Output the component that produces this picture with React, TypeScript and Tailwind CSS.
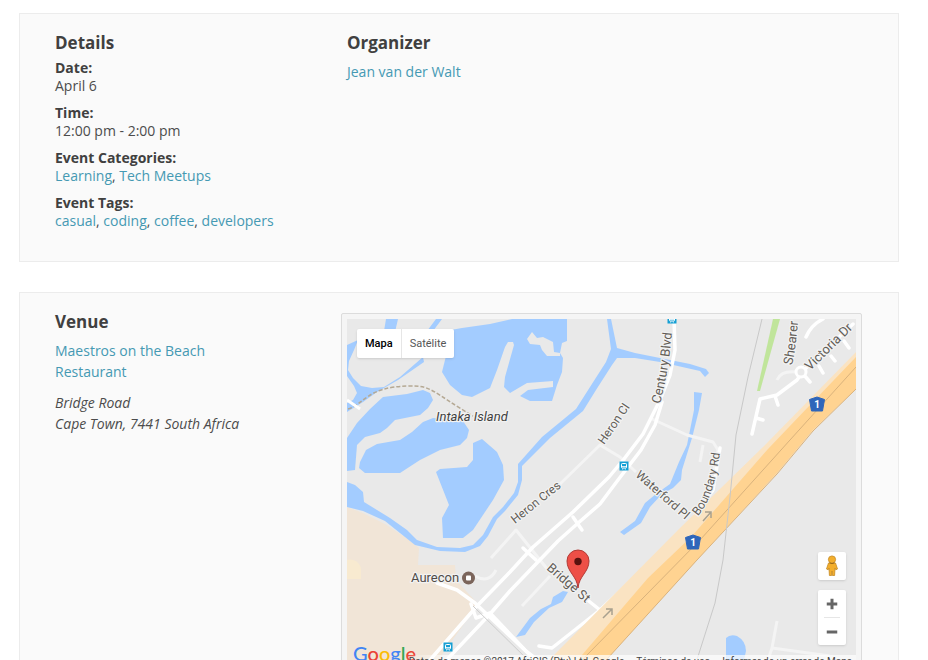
import { Minus, Plus } from "lucide-react";

const WATER = "#a3ccff";

const details = [
    { label: "Date:", text: "April 6" },
    { label: "Time:", text: "12:00 pm - 2:00 pm" },
    { label: "Event Categories:", links: ["Learning", "Tech Meetups"] },
    { label: "Event Tags:", links: ["casual", "coding", "coffee", "developers"] },
];

const streets = [
    { id: "century", name: "Century Blvd", size: 13, d: "M660 404 Q669 372 673 320" },
    { id: "heron-cl", name: "Heron Cl", size: 12, d: "M604 445 L639 394" },
    { id: "heron-cres", name: "Heron Cres", size: 12, d: "M515 524 L574 477" },
    { id: "waterford", name: "Waterford Pl", size: 12, d: "M635 476 L699 532" },
    { id: "boundary", name: "Boundary Rd", size: 12, d: "M698 516 Q717 494 721 440" },
    { id: "bridge", name: "Bridge St", size: 13, d: "M546 569 L599 615" },
    { id: "shearer", name: "Shearer", size: 13, d: "M792 365 Q796 350 799 310" },
    { id: "victoria", name: "Victoria Dr", size: 13, d: "M810 371 L866 316" },
];

const SectionTitle = ({ children }: { children: React.ReactNode }) => (
    <h2 className="text-[17px] leading-6 font-bold text-[#404040]">{children}</h2>
);

const TextLink = ({ children }: { children: React.ReactNode }) => (
    <a href="#" className="text-[#4599b3] hover:underline">{children}</a>
);

const Shield = ({ x, y }: { x: number; y: number }) => (
    <g transform={`translate(${x} ${y})`}>
        <path d="M0 -7 L7.5 -4.5 L5.5 7 L-5.5 7 L-7.5 -4.5 Z" fill="#2f66ba" stroke="#2f66ba" strokeLinejoin="round" />
        <text y="4" textAnchor="middle" fontSize="10" fontWeight="700" fill="#fff">1</text>
    </g>
);

const TransitStop = ({ x, y }: { x: number; y: number }) => (
    <g transform={`translate(${x} ${y})`}>
        <rect x="-4.5" y="-4.5" width="9" height="9" fill="#159fd4" />
        <rect x="-2.5" y="-2.5" width="5" height="4.5" rx="0.8" fill="none" stroke="#fff" />
        <path d="M-2 3 H-0.8 M0.8 3 H2 M-2 0.5 H2" stroke="#fff" strokeWidth="0.8" />
    </g>
);

const MapDrawing = () => (
    <svg
        viewBox="347 319 509 350"
        preserveAspectRatio="xMidYMid slice"
        className="block h-full w-full font-[Roboto,sans-serif]"
        role="img"
        aria-label="Map of Bridge Road"
    >
        <rect x="347" y="319" width="509" height="350" fill="#e9e9e9" />

        {/* Built-up area */}
        <path d="M347 507 L363 513 L385 524 L405 537 L419 548 L418 565 L455 565 L456 580 L478 604 L432 669 L347 669 Z" fill="#f1e5d7" />
        <path d="M347 560 a11 11 0 0 1 14 9 v10 h-14 Z" fill="#f8ead0" />

        {/* Lakes */}
        <g fill={WATER}>
            <path
                fillRule="evenodd"
                d="M445 331 L462 328 L490 324 L512 319 L567 319 L567 341 L562 343 L560 353 L563 358 L562 372 L557 385 L552 401 L530 401 L520 396 L528 390 L553 387 L553 381 L527 383 L510 393 L504 387 L505 377 L514 345 L513 342 L508 342 L505 347 L497 370 L490 388 L480 393 L472 397 L462 395 L450 385 L442 372 L446 356 Z M527 339 L532 332 L537 338 L543 337 L553 342 L554 352 L560 353 L560 356 L547 356 L542 350 L540 345 L530 344 Z"
            />
            <path d="M386 319 L398 319 L395 332 L384 331 Z M436 319 L442 319 L433 331 L427 331 Z" />
            <path d="M347 345 L358 340 L354 350 L349 361 L348 370 L353 378 L361 386 L372 388 L384 387 L400 377 L423 357 L424 362 L398 380 L377 392 L363 402 L347 412 L347 403 L353 400 L357 393 L354 386 L347 376 Z" />
            <path d="M383 397 L407 394 L423 390 L430 393 L433 400 L428 408 L420 415 L395 420 L387 428 L380 433 L365 437 L357 445 L355 470 L347 471 L347 438 L357 423 L370 409 Z" />
            <path d="M360 462 L366 450 L377 444 L400 440 L412 432 L423 422 L433 418 L463 421 L469 430 L467 438 L460 445 L440 450 L420 460 L400 473 L365 473 L359 468 Z" />
            <path d="M473 443 L482 439 L497 452 L503 465 L504 480 L493 500 L473 530 L463 538 L443 538 L442 518 L449 505 L436 472 L440 469 L467 467 L473 460 Z" />
            <path d="M347 482 L355 485 L363 492 L364 502 L390 518 L407 530 L417 540 L437 547 L460 548 L473 545 L483 535 L493 517 L503 507 L514 493 L518 482 L518 464 L542 437 L576 409 L590 387 L606 362 L611 349 L607 319 L611 319 L617 348 L635 353 L690 364 L706 369 L709 373 L705 377 L700 371 L660 362 L635 358 L617 358 L612 365 L596 390 L583 411 L550 438 L522 466 L522 480 L518 495 L505 511 L497 519 L488 536 L480 546 L465 552 L440 551 L415 545 L400 533 L385 521 L363 511 L347 507 Z" />
            <path d="M694 392 L702 393 L699 410 L692 438 L687 454 L682 470 L681 480 L673 488 L662 494 L650 507 L641 523 L624 535 L620 532 L635 521 L645 503 L656 494 L670 484 L679 462 L687 445 L694 410 Z" />
            <path d="M563 591 L568 592 L562 602 L549 608 L534 622 L525 635 L516 637 L530 618 L541 609 L551 604 L553 597 Z" />
        </g>

        {/* Park strip and footpath */}
        <path d="M773 319 L780 319 L760 391 L757 391 Z" fill="#c0e59b" />
        <path d="M348 409 C365 404 366 387 408 386 C432 385 432 392 473 416" fill="none" stroke="#b5a994" strokeWidth="1.5" strokeDasharray="4 2" />
        <path d="M347 400 L360 409" stroke="#fff" strokeWidth="3" />

        {/* Minor roads */}
        <g fill="none" stroke="#f4f4f4" strokeWidth="3" strokeLinejoin="round">
            <path d="M560 484 L600 445 L620 457 L636 472" />
            <path d="M491 558 L516 530 L548 570" />
            <path d="M650 418 L687 435 L713 442 L718 450 L714 470" />
            <path d="M703 445 L700 462" />
            <path d="M522 606 L550 576" />
            <path d="M777 380 Q781 370 797 372" />
            <path d="M475 576 Q489 584 496 570" />
        </g>

        {/* Roads */}
        <g fill="none" stroke="#fff" strokeWidth="3.5" strokeLinejoin="round" strokeLinecap="round">
            <path d="M674 319 L675 350 L670 375 L660 400 L651 418 L643 434 L624 459 L609 477 L573 512 L533 547 L510 572 L477 606 L430 660" />
            <path d="M662 402 L655 425 L641 450 L618 480 L600 504 L577 524 L558 541 L510 591 L490 614 L440 667" />
            <path d="M573 517 L582 530" />
            <path d="M437 583 L457 590 L475 603 L530 655 L545 669" />
            <path d="M471 604 L476 618 L490 613 L525 650 L545 666" />
            <path d="M523 548 L536 560" />
            <path d="M720 448 L713 490 L690 523 L667 545 L643 570 L600 610 L552 648 L539 646" />
            <path d="M585 598 L600 610" />
            <path d="M752 434 L760 399 L777 395 L797 380 L804 370 L853 324" />
            <path d="M804 375 L810 382 M775 396 L778 405 M756 418 L763 420 M806 337 Q811 325 823 319 M819 366 L823 373 M831 356 L835 361 M844 341 L849 348" />
        </g>
        <circle cx="801" cy="372" r="5" fill="#e9e9e9" stroke="#fff" strokeWidth="3" />
        <path d="M473 606 L531 663" stroke="#ccc" />

        {/* Highway */}
        <path d="M856 352 L810 399 L767 443 L680 528 L555 654 L540 669 L598 669 L697 560 L777 473 L813 430 L856 389 Z" fill="#fae3c2" />
        <path d="M856 357 L810 405 L768 449 L692 536 L648 578 L570 669 L598 669 L697 560 L777 473 L813 430 L856 389 Z" fill="#ffd391" />
        <g fill="none" stroke="#d9b27c">
            <path d="M856 367 L790 440 L700 540 L587 655 L574 669" />
            <path d="M856 389 L813 431 L777 474 L697 560 L598 669" />
        </g>
        <g fill="none" stroke="#a9a18f" strokeWidth="1.5">
            <path d="M703 521 L711 512 M705 512 H711 V518" />
            <path d="M603 618 L612 609 M606 609 H612 V615" />
        </g>

        {/* Railway and the pond south of it */}
        <path d="M762 319 L748 377 L736 435 L730 497 L723 560 L715 603 L694 669" fill="none" stroke="#c8c8c8" />
        <path d="M726 669 L726 638 Q730 634 737 636 Q746 641 746 651 L742 669 Z" fill={WATER} />
        <path d="M777 621 L772 648 L830 656 M772 648 L765 669" fill="none" stroke="#f4f4f4" strokeWidth="3" />

        {/* Street names */}
        <g fontSize="13" fill="#625d57" stroke="#f2f2f2" strokeWidth="2.5" strokeLinejoin="round" paintOrder="stroke">
            {streets.map(({ id, name, size, d }) => (
                <g key={id} fontSize={size}>
                    <path id={id} d={d} fill="none" stroke="none" />
                    <text><textPath href={`#${id}`}>{name}</textPath></text>
                </g>
            ))}
            <text x="436" y="421" fontStyle="italic" fill="#3f3f3f">Intaka Island</text>
            <text x="411" y="582" fill="#514b47">Aurecon</text>
        </g>

        <circle cx="468.5" cy="578" r="6.5" fill="#7b655b" />
        <rect x="466" y="575.5" width="5" height="5" rx="1" fill="#fff" />
        <Shield x={817} y={404} />
        <Shield x={693} y={542} />
        <TransitStop x={672} y={319} />
        <TransitStop x={624} y={466} />
        <TransitStop x={448} y={647} />

        {/* Venue pin */}
        <path d="M578 588 C577 576 567 572 567 561 A11 11 0 0 1 589 561 C589 572 579 576 578 588 Z" fill="#ee4f47" stroke="#b13a35" />
        <circle cx="578" cy="561.5" r="3.7" fill="#59120f" />
    </svg>
);

const Pegman = () => (
    <svg viewBox="0 0 14 22" className="h-[22px] w-3.5" aria-hidden="true">
        <path d="M3.5 8 H10.5 L12.5 14 L10.8 14.8 L10 13 L9.6 20.5 H7.4 L7 16 L6.6 20.5 H4.4 L4 13 L3.2 14.8 L1.5 14 Z" fill="#f3ae2c" stroke="#c48a26" strokeWidth="0.8" strokeLinejoin="round" />
        <circle cx="7" cy="4.5" r="3.6" fill="#f3ae2c" stroke="#c48a26" strokeWidth="0.8" />
        <path d="M4.5 7.8 Q7 9.6 9.5 7.8" fill="none" stroke="#9c6a1b" />
    </svg>
);

const VenueMap = () => (
    <div className="rounded-xs border border-[#dcdcdc] bg-[#f5f5f5] p-[5px]">
        <div className="relative h-[350px] overflow-hidden font-[Roboto,sans-serif]">
            <MapDrawing />

            <div className="absolute top-2.5 left-2.5 flex h-[29px] rounded-xs bg-white text-[11px] shadow-sm">
                <button type="button" className="border-r border-[#e6e6e6] px-2 font-medium text-black">Mapa</button>
                <button type="button" className="px-2 text-[#565656]">Satélite</button>
            </div>

            <div className="absolute right-2.5 bottom-6 flex flex-col gap-2.5 text-[#666]">
                <button type="button" aria-label="Street View" className="flex size-7 items-center justify-center rounded-xs bg-white shadow-sm">
                    <Pegman />
                </button>
                <div className="flex flex-col items-center rounded-xs bg-white shadow-sm">
                    <button type="button" aria-label="Zoom in" className="flex h-[27px] w-7 items-center justify-center">
                        <Plus className="size-[18px]" strokeWidth={4} strokeLinecap="butt" />
                    </button>
                    <div className="h-px w-4 bg-[#e6e6e6]" />
                    <button type="button" aria-label="Zoom out" className="flex h-[27px] w-7 items-center justify-center">
                        <Minus className="size-[18px]" strokeWidth={4} strokeLinecap="butt" />
                    </button>
                </div>
            </div>

            <a href="#" className="absolute bottom-0 left-1.5 font-[Lato,sans-serif] text-[20px] leading-8 font-medium">
                <span className="text-[#4285f4]">G</span>
                <span className="text-[#ea4335]">o</span>
                <span className="text-[#fbbc05]">o</span>
                <span className="text-[#4285f4]">g</span>
                <span className="text-[#34a853]">l</span>
                <span className="text-[#ea4335]">e</span>
            </a>

            <div className="absolute right-0 bottom-0 flex h-3.5 gap-3 bg-linear-to-r from-white/0 via-white/70 via-10% to-white/70 px-1 text-[10px] leading-[14px] whitespace-nowrap text-[#444]">
                <span>Datos de mapas ©2017 AfriGIS (Pty) Ltd, Google</span>
                <a href="#">Términos de uso</a>
                <a href="#">Informar de un error de Maps</a>
            </div>
        </div>
    </div>
);

export default function App() {
    return (
        <main className="flex h-screen flex-col gap-[30px] overflow-hidden bg-white pt-[13px] pr-[29px] pl-[19px] font-['Open_Sans',sans-serif] text-sm text-[#4c4c4c]">
            <section className="flex shrink-0 border border-[#ececec] bg-[#fafafa] px-[35px] pt-[17px] pb-[31px]">
                <div className="w-[292px] shrink-0">
                    <SectionTitle>Details</SectionTitle>
                    <dl className="mt-1 flex flex-col gap-[9px] leading-[18px]">
                        {details.map(({ label, text, links }) => (
                            <div key={label}>
                                <dt className="font-bold text-[#404040]">{label}</dt>
                                <dd>
                                    {text}
                                    {links?.map((link, i) => (
                                        <span key={link}>{i > 0 && ", "}<TextLink>{link}</TextLink></span>
                                    ))}
                                </dd>
                            </div>
                        ))}
                    </dl>
                </div>
                <div className="flex-1">
                    <SectionTitle>Organizer</SectionTitle>
                    <p className="mt-1.5 leading-[21px]"><TextLink>Jean van der Walt</TextLink></p>
                </div>
            </section>

            <section className="flex shrink-0 border border-[#ececec] bg-[#fafafa] pr-9 pb-5 pl-[35px]">
                <div className="w-[286px] shrink-0 pt-[17px] pr-20 leading-[21px]">
                    <SectionTitle>Venue</SectionTitle>
                    <p className="mt-1.5"><TextLink>Maestros on the Beach Restaurant</TextLink></p>
                    <address className="mt-2.5 whitespace-nowrap">
                        Bridge Road
                        <br />
                        Cape Town, 7441 South Africa
                    </address>
                </div>
                <div className="min-w-0 flex-1 pt-5">
                    <VenueMap />
                </div>
            </section>
        </main>
    );
}
